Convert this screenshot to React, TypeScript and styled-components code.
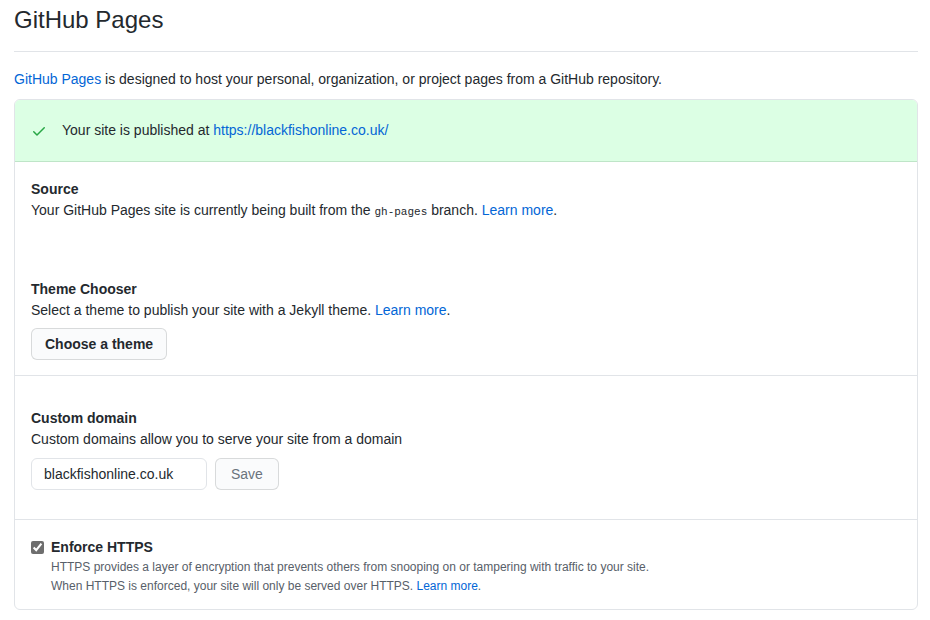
import React from 'react';
import styled, { createGlobalStyle } from 'styled-components';

const GlobalStyle = createGlobalStyle`
  body {
    margin: 0;
    background: #fff;
    color: #24292e;
    font-family: "Liberation Sans", Arial, sans-serif;
    font-size: 14px;
    line-height: 21px;
  }
`;

const Page = styled.div`
  width: 904px;
  margin-left: 14px;
`;

const Heading = styled.h2`
  margin: 0;
  padding: 5px 0 16px;
  font-size: 24px;
  font-weight: 400;
  line-height: 30px;
  border-bottom: 1px solid #e1e4e8;
`;

const Intro = styled.p`
  margin: 17px 0 9px;
`;

const Link = styled.a`
  color: #0366d6;
  text-decoration: none;
`;

const Box = styled.div`
  border: 1px solid #e1e4e8;
  border-radius: 6px;
  overflow: hidden;
`;

const Flash = styled.div`
  display: flex;
  align-items: center;
  padding: 20px 16px;
  background: #dcffe4;
  border-bottom: 1px solid #bfe5c8;
`;

const CheckIcon = styled.svg`
  width: 16px;
  height: 16px;
  margin-right: 15px;
  fill: #28a745;
`;

const Section = styled.div<{ $top?: number; $bottom?: number; $divider?: boolean }>`
  padding: ${(p) => p.$top ?? 16}px 16px ${(p) => p.$bottom ?? 16}px;
  border-bottom: ${(p) => (p.$divider ? '1px solid #e1e4e8' : 'none')};
`;

const Title = styled.h3`
  margin: 0;
  font-size: 14px;
  font-weight: 600;
  line-height: 21px;
`;

const Text = styled.p`
  margin: 0;
`;

const Code = styled.code`
  font-family: "Liberation Mono", "DejaVu Sans Mono", monospace;
  font-size: 11px;
`;

const Button = styled.button<{ $muted?: boolean }>`
  height: 32px;
  padding: 0 ${(p) => (p.$muted ? 15 : 13)}px;
  margin-top: 7px;
  font-family: inherit;
  font-size: 14px;
  font-weight: ${(p) => (p.$muted ? 500 : 600)};
  color: ${(p) => (p.$muted ? '#6a737d' : '#24292e')};
  background: #fafbfc;
  border: 1px solid rgba(27, 31, 35, 0.15);
  border-radius: 6px;
`;

const FormRow = styled.div`
  display: flex;
  gap: 8px;
  margin-top: 8px;
  ${Button} {
    margin-top: 0;
  }
`;

const Input = styled.input`
  width: 176px;
  height: 32px;
  box-sizing: border-box;
  padding: 0 12px;
  font-family: inherit;
  font-size: 14px;
  color: #24292e;
  border: 1px solid #e1e4e8;
  border-radius: 6px;
  outline: none;
`;

const CheckRow = styled.label`
  display: flex;
  align-items: center;
  gap: 7px;
`;

const Checkbox = styled.input`
  width: 13px;
  height: 13px;
  margin: 0;
  accent-color: #6e6e6e;
`;

const Note = styled.p`
  margin: 0 0 0 20px;
  font-size: 12px;
  line-height: 19px;
  color: #586069;
`;

const App: React.FC = () => {
  return (
    <Page>
      <GlobalStyle />
      <Heading>GitHub Pages</Heading>
      <Intro>
        <Link href="#">GitHub Pages</Link> is designed to host your personal, organization, or project pages from a
        GitHub repository.
      </Intro>

      <Box>
        <Flash>
          <CheckIcon viewBox="0 0 16 16">
            <path d="M13.78 4.22a.75.75 0 010 1.06l-7.25 7.25a.75.75 0 01-1.06 0L2.22 9.28a.75.75 0 011.06-1.06L6 10.94l6.72-6.72a.75.75 0 011.06 0z" />
          </CheckIcon>
          Your site is published at&nbsp;<Link href="#">https://blackfishonline.co.uk/</Link>
        </Flash>

        <Section $top={17} $bottom={40}>
          <Title>Source</Title>
          <Text>
            Your GitHub Pages site is currently being built from the <Code>gh-pages</Code> branch.{' '}
            <Link href="#">Learn more</Link>.
          </Text>
        </Section>

        <Section $top={16} $bottom={15} $divider>
          <Title>Theme Chooser</Title>
          <Text>
            Select a theme to publish your site with a Jekyll theme. <Link href="#">Learn more</Link>.
          </Text>
          <Button>Choose a theme</Button>
        </Section>

        <Section $top={32} $bottom={29} $divider>
          <Title>Custom domain</Title>
          <Text>Custom domains allow you to serve your site from a domain</Text>
          <FormRow>
            <Input defaultValue="blackfishonline.co.uk" />
            <Button $muted>Save</Button>
          </FormRow>
        </Section>

        <Section $top={17} $bottom={13}>
          <CheckRow>
            <Checkbox type="checkbox" defaultChecked />
            <Title>Enforce HTTPS</Title>
          </CheckRow>
          <Note>
            HTTPS provides a layer of encryption that prevents others from snooping on or tampering with traffic to
            your site.
            <br />
            When HTTPS is enforced, your site will only be served over HTTPS. <Link href="#">Learn more</Link>.
          </Note>
        </Section>
      </Box>
    </Page>
  );
};

export default App;
